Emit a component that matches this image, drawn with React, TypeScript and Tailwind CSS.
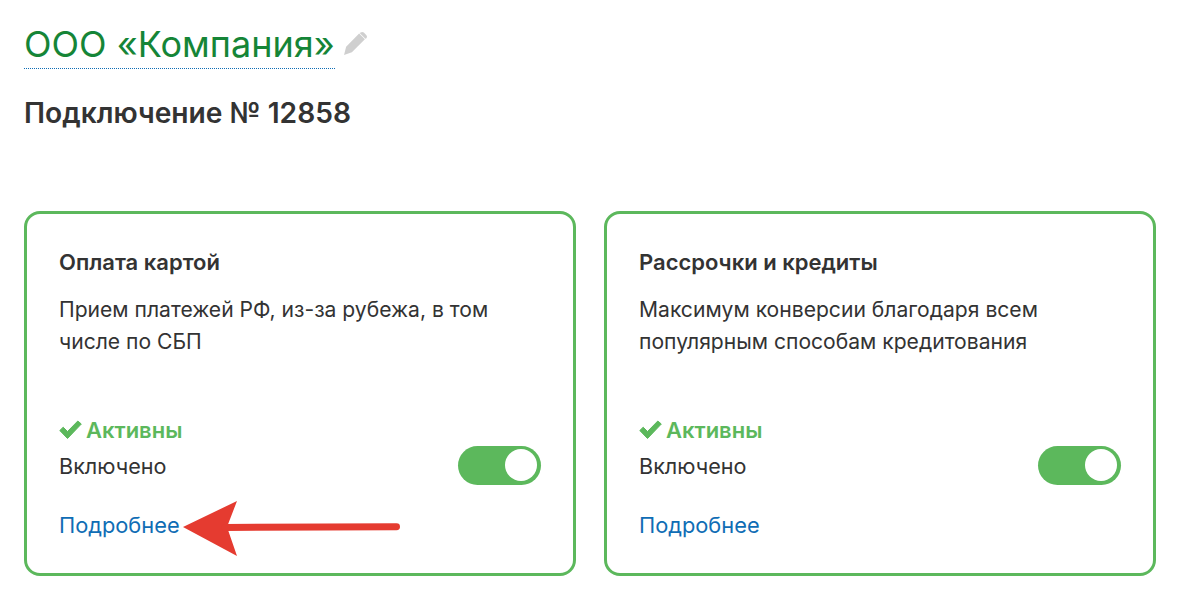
import { useState } from 'react';

const CARDS = [
  {
    title: 'Оплата картой',
    text: 'Прием платежей РФ, из-за рубежа, в том числе по СБП',
    arrow: true,
  },
  {
    title: 'Рассрочки и кредиты',
    text: 'Максимум конверсии благодаря всем популярным способам кредитования',
    arrow: false,
  },
];

function Toggle() {
  const [on, setOn] = useState(true);
  return (
    <button
      onClick={() => setOn(!on)}
      className={`mt-[-2px] flex h-[39px] w-[83px] items-center rounded-full bg-[#5cb85c] p-[4px] ${on ? 'justify-end' : 'justify-start'}`}
    >
      <span className="h-[32px] w-[32px] rounded-full bg-white" />
    </button>
  );
}

function Arrow() {
  return (
    <svg className="absolute left-[153px] top-[284px]" width="225" height="60" viewBox="0 0 225 60">
      <path d="M3 29 L57 3 L47 29 L57 58 Z" fill="#e53b30" />
      <path d="M45 29.5 L216.5 28.7" stroke="#e53b30" strokeWidth="7" strokeLinecap="round" fill="none" />
    </svg>
  );
}

function Card({ title, text, arrow }: { title: string; text: string; arrow: boolean }) {
  return (
    <div className="relative h-[365px] w-[552px] rounded-[16px] border-[3px] border-[#5cb85c] px-[32px] pt-[32px]">
      <div className="text-[22px] leading-[32px] font-semibold text-[#333]">{title}</div>
      <div className="mt-[16px] h-[64px] w-[450px] text-[21.1px] leading-[32px] text-[#333]">{text}</div>
      <div className="mt-[56px] flex items-center gap-[4px] text-[22px] leading-[32px] font-semibold text-[#5cb85c]">
        <svg width="23" height="20" viewBox="0 0 23 20">
          <path d="M0.8 10.5 L8.5 18.5 L22.3 4 L18.8 1 L8.5 11.5 L4.2 7.2 Z" fill="#5cb85c" stroke="#5cb85c" strokeLinejoin="round" />
        </svg>
        Активны
      </div>
      <div className="flex h-[40px] items-center justify-between text-[21.6px] text-[#333]">
        <span>Включено</span>
        <Toggle />
      </div>
      <a href="#" className="mt-[23px] block w-fit text-[21.8px] leading-[32px] text-[#0f6db5]">Подробнее</a>
      {arrow && <Arrow />}
    </div>
  );
}

export default function App() {
  return (
    <div className="h-[597px] w-[1182px] overflow-hidden bg-white pl-[24px] font-['Inter',sans-serif]">
      <div className="flex items-center pt-[22px]">
        <h1 className="border-b border-dotted border-[#0f6db5] pb-[1px] text-[36px] leading-[45px] font-normal text-[#158537]">
          ООО «Компания»
        </h1>
        <svg className="ml-[8px] mt-[-4px]" width="25" height="25" viewBox="0 0 24 24">
          <path d="M1 23 L3 15 L15.5 2.5 L21 8 L8.5 20.5 Z M17 1.5 Q18.5 0.2 20 1.5 L22.5 4 Q23.7 5.5 22.5 7 L21.5 7.5 L16 2 Z" fill="#cfcfcf" />
        </svg>
      </div>
      <h2 className="mt-[27px] text-[28.2px] leading-[34px] font-semibold text-[#333]">Подключение № 12858</h2>
      <div className="mt-[81px] flex gap-[28px]">
        {CARDS.map(c => (
          <Card key={c.title} {...c} />
        ))}
      </div>
    </div>
  );
}
